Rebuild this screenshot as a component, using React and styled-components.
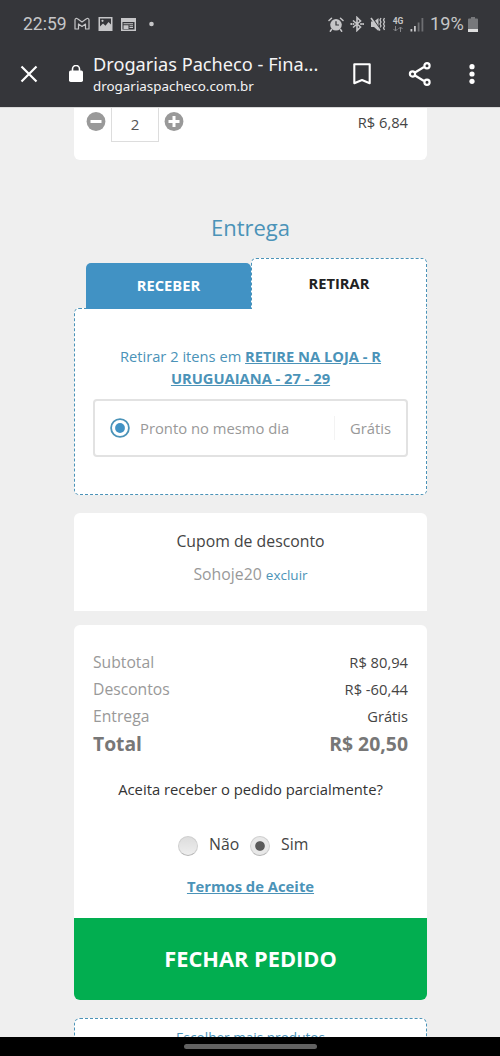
import React from 'react';
import styled, { createGlobalStyle } from 'styled-components';

const GlobalStyle = createGlobalStyle`
  * {
    box-sizing: border-box;
  }
  body {
    margin: 0;
    background: #efefef;
    font-family: 'Open Sans', 'Noto Sans', sans-serif;
  }
`;

const blue = '#4192c4';
const textBlue = '#4b93b8';

const Screen = styled.div`
  height: 1056px;
  display: flex;
  flex-direction: column;
  overflow: hidden;
`;

const BrowserHeader = styled.header`
  flex: none;
  height: 107px;
  background: #35363a;
  color: #f4f4f5;
`;

const StatusBar = styled.div`
  height: 46px;
  padding: 2px 22px 0 23px;
  display: flex;
  align-items: center;
  color: #c6c6c8;
  svg {
    display: block;
    flex: none;
  }
`;

const StatusText = styled.span`
  font: 400 ${props => props.size}px/22px Roboto, sans-serif;
  width: ${props => props.width}px;
  white-space: nowrap;
`;

const StatusIcons = styled.div`
  display: flex;
  align-items: center;
  gap: ${props => props.gap}px;
  margin-left: ${props => props.left || 0};
`;

const Toolbar = styled.div`
  height: 61px;
  display: flex;
  align-items: center;
  padding: 0 20px 6px 20px;
  svg {
    display: block;
    flex: none;
  }
`;

const Address = styled.div`
  margin-left: 10px;
  width: 260px;
  padding-top: 2px;
  font-family: 'Noto Sans', sans-serif;
  white-space: nowrap;
`;

const PageTitle = styled.div`
  font-size: 18.2px;
  line-height: 22px;
`;

const Domain = styled.div`
  font-size: 13.4px;
  line-height: 22px;
`;

const Actions = styled.div`
  display: flex;
  align-items: center;
  gap: 37px;
`;

const Page = styled.main`
  flex: 1;
  min-height: 0;
  overflow: hidden;
  padding: 0 73px 0 74px;
  background: #efefef;
  border-top: 1px solid #d9d9d9;
`;

const ProductCard = styled.section`
  height: 52px;
  background: #fff;
  border-radius: 0 0 6px 6px;
  display: flex;
  align-items: flex-start;
  padding: 0 19px 0 12px;
  svg {
    margin-top: 4px;
  }
`;

const Quantity = styled.div`
  width: 48px;
  height: 34px;
  margin: 0 5px;
  border: 1px solid #ddd;
  border-top: 0;
  text-align: center;
  font-size: 15px;
  line-height: 33px;
  color: #555;
`;

const Price = styled.span`
  margin-left: auto;
  font-size: 14.7px;
  line-height: 28px;
  color: #444;
`;

const SectionTitle = styled.h2`
  margin: 52px 0 15px;
  font-size: 22px;
  font-weight: 400;
  line-height: 31px;
  text-align: center;
  color: ${textBlue};
`;

const Tabs = styled.div`
  display: flex;
  align-items: flex-end;
  height: 50px;
  padding-left: 12px;
`;

const Tab = styled.div`
  flex: none;
  position: relative;
  width: ${props => (props.$active ? 176 : 165)}px;
  height: ${props => (props.$active ? 51 : 46)}px;
  margin-bottom: -1px;
  border: ${props => (props.$active ? `1px dashed ${textBlue}` : 0)};
  border-bottom: 0;
  border-radius: 5px 5px 0 0;
  background: ${props => (props.$active ? '#fff' : blue)};
  color: ${props => (props.$active ? '#222' : '#fff')};
  font-size: 14.7px;
  font-weight: 700;
  line-height: ${props => (props.$active ? 49 : 45)}px;
  text-align: center;
`;

const PickupPanel = styled.section`
  height: 187px;
  border: 1px dashed ${textBlue};
  border-radius: 5px 0 5px 5px;
  background: #fff;
  padding: 36px 18px 0;
`;

const PickupInfo = styled.p`
  margin: 0 0 10px;
  padding: 0 20px;
  font-size: 14.7px;
  line-height: 22px;
  text-align: center;
  color: ${textBlue};
`;

const StoreLink = styled.a`
  font-weight: 700;
  text-decoration: underline;
`;

const ShippingOption = styled.div`
  height: 58px;
  border: 2px solid #e2e2e2;
  border-radius: 4px;
  display: flex;
  align-items: center;
  padding: 0 15px;
  font-size: 14.8px;
  color: #999;
`;

const OptionName = styled.span`
  margin-left: 10px;
`;

const OptionPrice = styled.span`
  margin-left: auto;
  border-left: 1px solid #f3f3f3;
  padding-left: 15px;
  line-height: 24px;
`;

const CouponCard = styled.section`
  height: 98px;
  margin-top: 18px;
  border-radius: 6px 6px 0 0;
  background: #fff;
  padding-top: 16px;
  text-align: center;
`;

const CouponTitle = styled.div`
  font-size: 15.8px;
  line-height: 24px;
  color: #444;
`;

const CouponCode = styled.div`
  margin-top: 9px;
  font-size: 15.8px;
  line-height: 24px;
  color: #999;
`;

const RemoveLink = styled.a`
  font-size: 13.5px;
  color: ${textBlue};
`;

const Summary = styled.section`
  height: 374.5px;
  margin-top: 14px;
  border-radius: 6px;
  background: #fff;
  overflow: hidden;
  display: flex;
  flex-direction: column;
  text-align: center;
`;

const Totals = styled.div`
  padding: 24px 19px 0;
`;

const TotalLine = styled.div`
  display: flex;
  justify-content: space-between;
  font-size: ${props => (props.$strong ? 19.3 : 15.7)}px;
  font-weight: ${props => (props.$strong ? 700 : 400)};
  line-height: 27px;
  color: ${props => (props.$strong ? '#777' : '#999')};
`;

const Amount = styled.span`
  font-size: ${props => (props.$strong ? 19.4 : 14.7)}px;
  color: ${props => (props.$strong ? '#777' : '#444')};
`;

const Question = styled.div`
  margin-top: 20px;
  font-size: 14.8px;
  line-height: 24px;
  color: #333;
`;

const Answers = styled.div`
  display: flex;
  align-items: center;
  height: 24px;
  margin: 31px 0 0 104px;
  font-size: 15.8px;
  color: #444;
`;

const Answer = styled.span`
  width: ${props => props.width}px;
  padding-left: 11px;
  text-align: left;
  white-space: nowrap;
`;

const Radio = styled.span`
  flex: none;
  width: 20px;
  height: 20px;
  margin-top: 3px;
  border: 1px solid #cfcfcf;
  border-bottom-color: #b5b5b5;
  border-radius: 50%;
  background: ${props =>
    props.$checked
      ? 'radial-gradient(circle, #5a5a5a 0 4.3px, #e8e8e8 5.3px)'
      : 'linear-gradient(#ddd, #eee)'};
`;

const TermsLink = styled.a`
  margin-top: 19px;
  font-size: 14.8px;
  font-weight: 700;
  line-height: 22px;
  text-decoration: underline;
  color: ${textBlue};
`;

const CheckoutButton = styled.button`
  margin-top: auto;
  height: 82px;
  flex: none;
  border: 0;
  padding: 1px 0 0;
  background: #02ae50;
  color: #fff;
  font: 700 21.8px/30px 'Open Sans', sans-serif;
`;

const MoreProducts = styled.section`
  height: 60px;
  margin-top: 18.5px;
  border: 1px dashed ${textBlue};
  border-radius: 6px;
  background: #fff;
  padding-top: 8px;
  font-size: 13.6px;
  line-height: 22px;
  text-align: center;
  color: ${textBlue};
`;

const NavigationBar = styled.footer`
  flex: none;
  height: 19px;
  background: #000;
  display: flex;
  justify-content: center;
  align-items: flex-start;
  padding-top: 7px;
`;

const HomeHandle = styled.div`
  width: 133px;
  height: 5px;
  border-radius: 3px;
  background: #616161;
`;

const MailIcon = () => (
  <svg width="16" height="14" viewBox="0 0 16 14" fill="none" stroke="currentColor" strokeWidth="1.2" strokeLinejoin="round">
    <path d="M1 12V3C1 1.300 2.600 1.100 3.500 1.800L8 5l4.500-3.200C13.400 1.100 15 1.300 15 3v9h-3.500V7L8 9.500 4.500 7v5z" />
  </svg>
);

const PhotoIcon = () => (
  <svg width="15" height="14" viewBox="0 0 15 14">
    <path fill="currentColor" fillRule="evenodd" d="M.5 0h14v14H.5zM2 1.500v8l3-3 2.500 2.200 3-3.700 2.500 2.500v-6z" />
    <circle cx="4.500" cy="3.800" r="1.100" fill="currentColor" />
  </svg>
);

const NewsIcon = () => (
  <svg width="15" height="13" viewBox="0 0 15 13">
    <path fill="currentColor" fillRule="evenodd" d="M0 0h15v13H0zM1.500 4v7.500h12V4z" />
    <path fill="currentColor" d="M2.500 5.300H12v1H2.500zM2.500 7.200h5V11h-5zM8.500 7.200H12v1H8.500zM8.500 9.100H12v1H8.500z" />
  </svg>
);

const AlarmIcon = () => (
  <svg width="16" height="15" viewBox="0 0 16 15" fill="none" stroke="currentColor" strokeWidth="1.5" strokeLinecap="round">
    <path d="M1 3.500 3.500 1.200M15 3.500l-2.500-2.300M3.500 12.500l-1.200 1.700M12.500 12.500l1.200 1.700" />
    <circle cx="8" cy="7.800" r="5.800" fill="currentColor" stroke="none" />
    <path stroke="#35363a" strokeWidth="1.200" d="M8 4.500V8h2.500" />
  </svg>
);

const BluetoothIcon = () => (
  <svg width="14" height="16" viewBox="0 0 14 16" fill="none" stroke="currentColor" strokeWidth="1.600">
    <path d="m3 4.500 7.500 6.500L7 14.500v-13L10.500 5 3 11.500" />
    <path strokeWidth="1.900" strokeLinecap="round" d="M1.200 8h.2M3.500 8h.1M11 8h.1M13 8h.1" />
  </svg>
);

const VibrateIcon = () => (
  <svg width="16" height="15" viewBox="0 0 16 15" fill="none" stroke="currentColor" strokeWidth="1.300">
    <path fill="currentColor" stroke="none" d="M1 4.500h3L8.500 1v13L4 10H1z" />
    <path stroke="#35363a" d="m2.300.600 8 12" />
    <path strokeWidth="1.600" d="m1 1 9 12.500" />
    <path d="M11 1 10 3l1 2-1 2 1 2-1 1.500M14.500 1l-1 2 1 2-1 2 1 2-1 2 1 2" />
  </svg>
);

const NetworkLabel = styled.div`
  width: 12px;
  font: 700 8.5px/8px Roboto, sans-serif;
  text-align: center;
  svg {
    margin: 1px auto 0;
  }
`;

const SignalIcon = () => (
  <svg width="14" height="15" viewBox="0 0 14 15" fill="currentColor">
    <path d="M.5 12h1.800v2.500H.5zM4 9h1.800v5.500H4z" />
    <path opacity=".4" d="M7.700 5.500h1.800v9H7.700zM11.500 1h1.800v13.500h-1.800z" />
  </svg>
);

const BatteryIcon = () => (
  <svg width="10" height="15" viewBox="0 0 10 15">
    <path fill="#77787b" d="M3 0h4v1.500h2a1 1 0 0 1 1 1V12H0V2.500a1 1 0 0 1 1-1h2z" />
    <path fill="#dedede" d="M0 12h10v3H0z" />
  </svg>
);

const CloseIcon = () => (
  <svg width="18" height="18" viewBox="0 0 18 18" stroke="#fff" strokeWidth="2.200">
    <path d="m1.500 1.500 15 15m0-15-15 15" />
  </svg>
);

const LockIcon = () => (
  <svg width="14" height="18" viewBox="0 0 14 18">
    <rect y="5.500" width="14" height="11.500" rx="1.700" fill="#fff" />
    <path d="M3.500 6.500V4a3.500 3.500 0 0 1 7 0v2.500" fill="none" stroke="#fff" strokeWidth="1.600" />
  </svg>
);

const BookmarkIcon = () => (
  <svg width="18" height="22" viewBox="0 0 18 22" fill="none" stroke="#fff" strokeWidth="2.100">
    <path d="M1.300 1.200h15.400v19L9 17l-7.700 3.200z" strokeLinejoin="round" />
  </svg>
);

const ShareIcon = () => (
  <svg width="24" height="26" viewBox="0 0 24 26" fill="none" stroke="#fff" strokeWidth="2.200">
    <path d="m7 11.500 9-5.500M7 14.500l9 5.500" />
    <circle cx="4.500" cy="13" r="2.600" />
    <circle cx="19" cy="4.700" r="2.600" />
    <circle cx="19" cy="21.300" r="2.600" />
  </svg>
);

const MenuIcon = () => (
  <svg width="6" height="20" viewBox="0 0 6 20" fill="#fff">
    <circle cx="3" cy="2.700" r="2.600" />
    <circle cx="3" cy="10" r="2.600" />
    <circle cx="3" cy="17.300" r="2.600" />
  </svg>
);

const StepIcon = ({ plus }) => (
  <svg width="20" height="20" viewBox="0 0 20 20">
    <circle cx="10" cy="9.500" r="9.400" fill="#999" />
    <path d={plus ? 'M4.500 9.500h11M10 4v11' : 'M4.500 9.500h11'} stroke="#fff" strokeWidth="3" />
  </svg>
);

const SelectedIcon = () => (
  <svg width="20" height="20" viewBox="0 0 20 20">
    <circle cx="10" cy="10" r="8.900" fill="none" stroke={textBlue} strokeWidth="1.800" />
    <circle cx="10" cy="10" r="4.900" fill={blue} />
  </svg>
);

const totals = [
  { label: 'Subtotal', value: 'R$ 80,94' },
  { label: 'Descontos', value: 'R$ -60,44' },
  { label: 'Entrega', value: 'Grátis' },
  { label: 'Total', value: 'R$ 20,50', strong: true }
];

const App = () => (
  <Screen>
    <GlobalStyle />
    <BrowserHeader>
      <StatusBar>
        <StatusText size={17.5} width={51}>22:59</StatusText>
        <StatusIcons gap={8}>
          <MailIcon />
          <PhotoIcon />
          <NewsIcon />
          <svg width="20" height="6" viewBox="0 0 20 6">
            <circle cx="7.500" cy="3" r="2.300" fill="currentColor" />
          </svg>
        </StatusIcons>
        <StatusIcons gap={6} left="auto">
          <AlarmIcon />
          <BluetoothIcon />
          <VibrateIcon />
          <NetworkLabel>
            4G
            <svg width="10" height="6" viewBox="0 0 10 6" fill="none" stroke="#85868a">
              <path d="M2.500 0v5M.5 3l2 2 2-2M7.500 6V1M5.500 3l2-2 2 2" />
            </svg>
          </NetworkLabel>
          <SignalIcon />
        </StatusIcons>
        <StatusIcons gap={1} left="6px">
          <StatusText size={18.2} width={37}>19%</StatusText>
          <BatteryIcon />
        </StatusIcons>
      </StatusBar>
      <Toolbar>
        <CloseIcon />
        <StatusIcons left="31px">
          <LockIcon />
        </StatusIcons>
        <Address>
          <PageTitle>Drogarias Pacheco - Fina...</PageTitle>
          <Domain>drogariaspacheco.com.br</Domain>
        </Address>
        <Actions>
          <BookmarkIcon />
          <ShareIcon />
          <MenuIcon />
        </Actions>
      </Toolbar>
    </BrowserHeader>
    <Page>
      <ProductCard>
        <StepIcon />
        <Quantity>2</Quantity>
        <StepIcon plus />
        <Price>R$ 6,84</Price>
      </ProductCard>
      <SectionTitle>Entrega</SectionTitle>
      <Tabs>
        <Tab>RECEBER</Tab>
        <Tab $active>RETIRAR</Tab>
      </Tabs>
      <PickupPanel>
        <PickupInfo>
          Retirar 2 itens em <StoreLink>RETIRE NA LOJA - R URUGUAIANA - 27 - 29</StoreLink>
        </PickupInfo>
        <ShippingOption>
          <SelectedIcon />
          <OptionName>Pronto no mesmo dia</OptionName>
          <OptionPrice>Grátis</OptionPrice>
        </ShippingOption>
      </PickupPanel>
      <CouponCard>
        <CouponTitle>Cupom de desconto</CouponTitle>
        <CouponCode>
          Sohoje20 <RemoveLink>excluir</RemoveLink>
        </CouponCode>
      </CouponCard>
      <Summary>
        <Totals>
          {totals.map(({ label, value, strong }) => (
            <TotalLine key={label} $strong={strong}>
              <span>{label}</span>
              <Amount $strong={strong}>{value}</Amount>
            </TotalLine>
          ))}
        </Totals>
        <Question>Aceita receber o pedido parcialmente?</Question>
        <Answers>
          <Radio />
          <Answer width={52}>Não</Answer>
          <Radio $checked />
          <Answer width={50}>Sim</Answer>
        </Answers>
        <TermsLink>Termos de Aceite</TermsLink>
        <CheckoutButton>FECHAR PEDIDO</CheckoutButton>
      </Summary>
      <MoreProducts>Escolher mais produtos</MoreProducts>
    </Page>
    <NavigationBar>
      <HomeHandle />
    </NavigationBar>
  </Screen>
);

export default App;
